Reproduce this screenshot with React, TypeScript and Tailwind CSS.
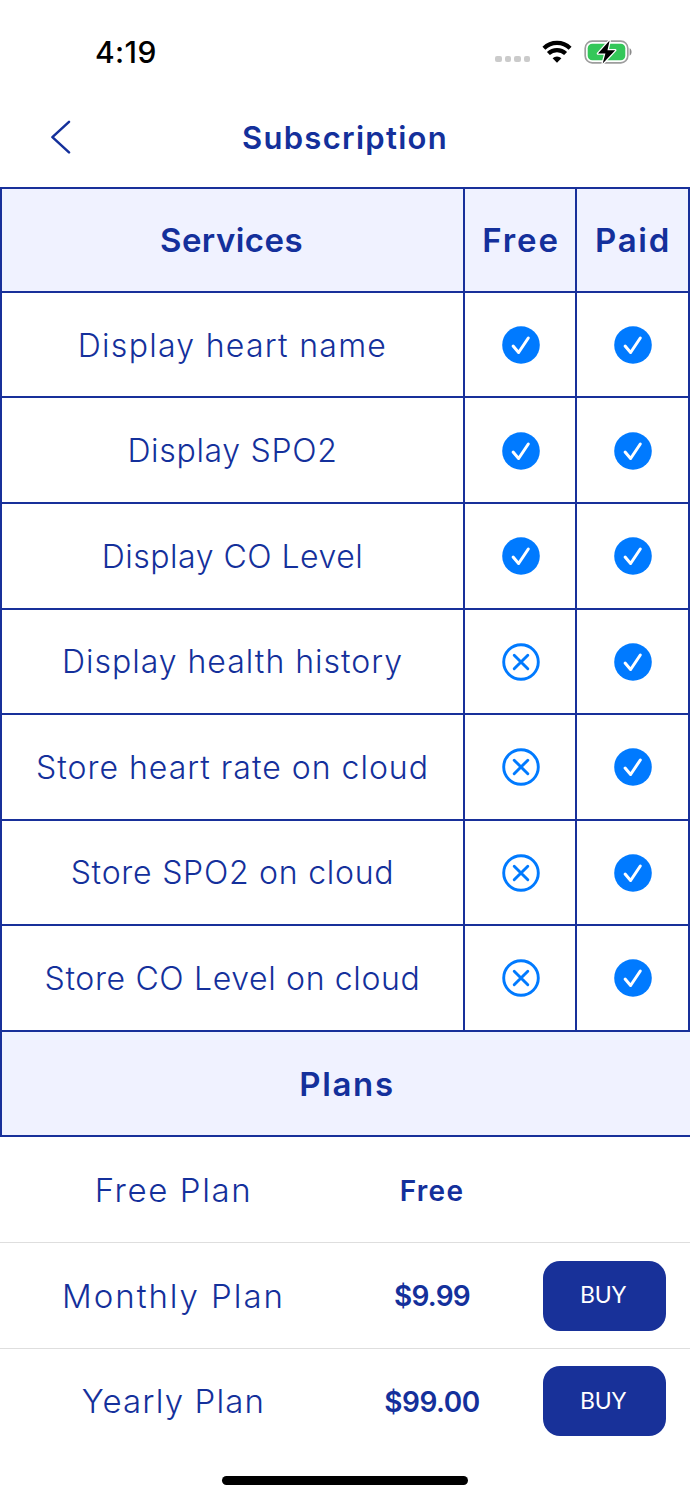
import React from "react";

type Service = {
  name: string;
  free: boolean;
  paid: boolean;
  tracking: string;
};

type Plan = {
  name: string;
  price: string;
  buy: boolean;
  tracking: string;
  priceTracking: string;
};

const services: Service[] = [
  { name: "Display heart name", free: true, paid: true, tracking: "tracking-[1.28px]" },
  { name: "Display SPO2", free: true, paid: true, tracking: "tracking-[0.7px]" },
  { name: "Display CO Level", free: true, paid: true, tracking: "tracking-[0.5px]" },
  { name: "Display health history", free: false, paid: true, tracking: "tracking-[1px]" },
  { name: "Store heart rate on cloud", free: false, paid: true, tracking: "tracking-[1px]" },
  { name: "Store SPO2 on cloud", free: false, paid: true, tracking: "tracking-[0.75px]" },
  { name: "Store CO Level on cloud", free: false, paid: true, tracking: "tracking-[0.65px]" },
];

const plans: Plan[] = [
  { name: "Free Plan", price: "Free", buy: false, tracking: "tracking-[1.6px]", priceTracking: "tracking-[1.3px]" },
  { name: "Monthly Plan", price: "$9.99", buy: true, tracking: "tracking-[1.95px]", priceTracking: "tracking-[-0.75px]" },
  { name: "Yearly Plan", price: "$99.00", buy: true, tracking: "tracking-[1.15px]", priceTracking: "tracking-[-0.5px]" },
];

const StatusBar = () => (
  <div className="h-[103px] flex items-center justify-between pl-[95px] pr-[57px] text-black">
    <p className="text-[30px] leading-none font-medium tracking-[0.4px]">4:19</p>
    <div className="flex items-center">
      <div className="flex gap-[3px] mt-[15px] mr-[12px]">
        <span className="size-[6.5px] rounded-[2px] bg-[#cbcbcb]" />
        <span className="size-[6.5px] rounded-[2px] bg-[#cbcbcb]" />
        <span className="size-[6.5px] rounded-[2px] bg-[#cbcbcb]" />
        <span className="size-[6.5px] rounded-[2px] bg-[#cbcbcb]" />
      </div>
      <svg width="30" height="24" viewBox="0 0 30 24" fill="none" stroke="#000" strokeWidth="4.2">
        <path d="M1.9 8.2a18.8 18.8 0 0 1 26.2 0" />
        <path d="M6.4 13.6a12.2 12.2 0 0 1 17.2 0" />
        <path d="M15 22.8l-4.4-4.5a6.2 6.2 0 0 1 8.8 0z" fill="#000" stroke="none" />
      </svg>
      <svg className="ml-[12px]" width="49" height="28" viewBox="0 0 49 28">
        <rect x="1.2" y="3.2" width="42.6" height="21.6" rx="7" fill="#fff" stroke="#9d9d9d" strokeWidth="1.7" />
        <rect x="3.7" y="5.7" width="37.6" height="16.6" rx="4.6" fill="#34c759" />
        <path d="M45.6 10.3c2.6 1.1 2.6 6.3 0 7.4z" fill="#8a8a8a" />
        <path
          d="M25.6 2.6L14 15.5h7.4l-2.7 10L31.2 12.2h-7.7z"
          fill="#000"
          stroke="#fff"
          strokeWidth="2.6"
          strokeLinejoin="round"
          paintOrder="stroke"
        />
      </svg>
    </div>
  </div>
);

const CheckMark = () => (
  <svg width="38" height="38" viewBox="0 0 38 38" fill="none">
    <circle cx="19" cy="19" r="18.8" fill="#007aff" />
    <path d="M11.1 20.1l5.5 6.4L26.3 12" stroke="#fff" strokeWidth="3" strokeLinecap="round" strokeLinejoin="round" />
  </svg>
);

const CrossMark = () => (
  <svg width="38" height="38" viewBox="0 0 38 38" fill="none" stroke="#007aff" strokeWidth="2.9">
    <circle cx="19" cy="19" r="17.3" />
    <path d="M12.2 12.2l13.6 13.6M25.8 12.2L12.2 25.8" strokeLinecap="round" />
  </svg>
);

export default function App() {
  return (
    <div className="w-[690px] h-[1500px] overflow-hidden bg-white text-[#14309b] font-['Inter','Liberation_Sans',sans-serif] flex flex-col">
      <StatusBar />
      <div className="h-[84px] pb-[16px] grid grid-cols-[120px_1fr_120px] items-center">
        <svg className="ml-[50px]" width="22" height="34" viewBox="0 0 22 34" fill="none">
          <path d="M19 1.8L2.4 17.1L19 32.4" stroke="#14309b" strokeWidth="2.5" strokeLinecap="round" strokeLinejoin="round" />
        </svg>
        <h1 className="text-center text-[31px] leading-none font-semibold tracking-[1.3px]">Subscription</h1>
      </div>

      <div className="border-l-2 border-[#18309a]">
        <div className="h-[103.9px] border-t-2 border-r-2 border-[#18309a] bg-[#f0f2ff] grid grid-cols-[461px_112px_111px] text-[33px] leading-none font-semibold">
          <div className="flex items-center justify-center pt-[2px] pr-[2px] tracking-[0.45px]">Services</div>
          <div className="flex items-center justify-center border-l-2 border-[#18309a] pt-[1px] pl-[2px] tracking-[1.9px]">Free</div>
          <div className="flex items-center justify-center border-l-2 border-[#18309a] pt-[1px] pl-[3px] tracking-[1.7px]">Paid</div>
        </div>
        {services.map((service) => (
          <div
            key={service.name}
            className="h-[105.56px] border-t-2 border-r-2 border-[#18309a] grid grid-cols-[461px_112px_111px]"
          >
            <div
              className={`flex items-center justify-center pt-[2px] text-[32px] leading-none font-[350] ${service.tracking}`}
            >
              {service.name}
            </div>
            <div className="flex items-center justify-center border-l-2 border-[#18309a] pt-[1px] pl-[1.5px]">
              {service.free ? <CheckMark /> : <CrossMark />}
            </div>
            <div className="flex items-center justify-center border-l-2 border-[#18309a] pt-[1px] pl-[2px]">
              {service.paid ? <CheckMark /> : <CrossMark />}
            </div>
          </div>
        ))}
        <div className="h-[107.5px] border-y-2 border-[#18309a] bg-[#f0f2ff] flex items-center justify-center pt-[2px] pl-[2px] text-[33px] leading-none font-semibold tracking-[1.7px]">
          Plans
        </div>
      </div>

      {plans.map((plan, i) => (
        <div
          key={plan.name}
          className={`grid grid-cols-[346px_172px_172px] items-center text-center leading-none ${
            i > 0 ? "h-[105.5px] border-t border-[#dedede]" : "h-[104.9px]"
          }`}
        >
          <p className={`text-[33px] font-[350] pl-[1px] pt-[2px] ${plan.tracking}`}>{plan.name}</p>
          <p className={`text-[28px] font-semibold pt-[2px] ${plan.priceTracking}`}>{plan.price}</p>
          {plan.buy && (
            <button className="w-[123px] h-[70px] mt-px ml-[25px] pr-[3px] pb-[2px] rounded-[17px] bg-[#183199] text-white text-[23px] font-['Lato','Liberation_Sans',sans-serif]">
              BUY
            </button>
          )}
        </div>
      ))}

      <div className="w-[246px] h-[9px] mt-[22.6px] mx-auto shrink-0 rounded-full bg-black" />
    </div>
  );
}
